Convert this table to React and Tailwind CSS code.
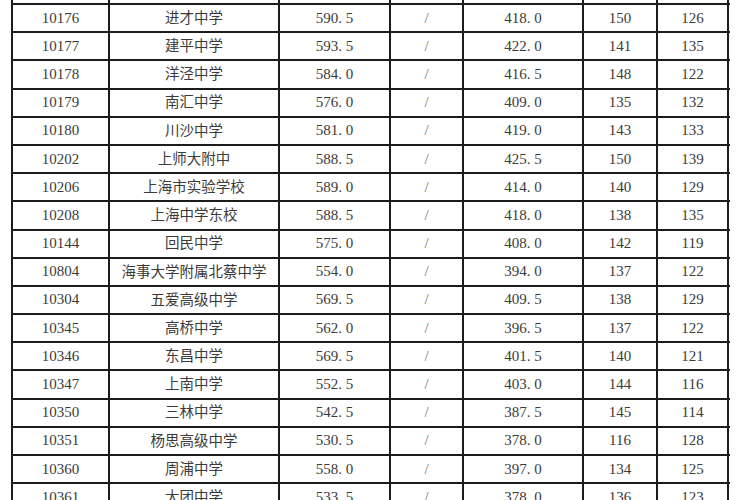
import React from 'react'

const rows = [
  ['10176', '进才中学', '590. 5', '/', '418. 0', '150', '126'],
  ['10177', '建平中学', '593. 5', '/', '422. 0', '141', '135'],
  ['10178', '洋泾中学', '584. 0', '/', '416. 5', '148', '122'],
  ['10179', '南汇中学', '576. 0', '/', '409. 0', '135', '132'],
  ['10180', '川沙中学', '581. 0', '/', '419. 0', '143', '133'],
  ['10202', '上师大附中', '588. 5', '/', '425. 5', '150', '139'],
  ['10206', '上海市实验学校', '589. 0', '/', '414. 0', '140', '129'],
  ['10208', '上海中学东校', '588. 5', '/', '418. 0', '138', '135'],
  ['10144', '回民中学', '575. 0', '/', '408. 0', '142', '119'],
  ['10804', '海事大学附属北蔡中学', '554. 0', '/', '394. 0', '137', '122'],
  ['10304', '五爱高级中学', '569. 5', '/', '409. 5', '138', '129'],
  ['10345', '高桥中学', '562. 0', '/', '396. 5', '137', '122'],
  ['10346', '东昌中学', '569. 5', '/', '401. 5', '140', '121'],
  ['10347', '上南中学', '552. 5', '/', '403. 0', '144', '116'],
  ['10350', '三林中学', '542. 5', '/', '387. 5', '145', '114'],
  ['10351', '杨思高级中学', '530. 5', '/', '378. 0', '116', '128'],
  ['10360', '周浦中学', '558. 0', '/', '397. 0', '134', '125'],
  ['10361', '大团中学', '533. 5', '/', '378. 0', '136', '123']
]

const cols = 'grid grid-cols-[97px_170px_111px_73px_120px_74px_71px]'

export default function App() {
  return (
    <div
      className="w-[750px] h-[500px] overflow-hidden bg-white text-[#3b3b3b]"
      style={{ fontFamily: '"Liberation Serif", "Noto Sans CJK SC", serif' }}
    >
      <div className="ml-[11px] w-[719px] border-l-2 border-[#1c1c1c]">
        <div className={`${cols} h-[5px] border-b-2 border-[#1c1c1c]`}>
          {[0, 1, 2, 3, 4, 5, 6].map((i) => (
            <div key={i} className="border-r-2 border-[#1c1c1c]" />
          ))}
        </div>
        {rows.map((r) => (
          <div key={r[0]} className={`${cols} h-[28.2px] border-b-2 border-[#1c1c1c]`}>
            {r.map((c, i) => (
              <div
                key={i}
                className={`flex items-center justify-center border-r-2 border-[#1c1c1c] leading-none ${
                  i === 3 ? 'text-[#777]' : ''
                } ${i === 1 ? 'text-[14.5px]' : 'text-[15px]'}`}
              >
                {c}
              </div>
            ))}
          </div>
        ))}
      </div>
    </div>
  )
}
